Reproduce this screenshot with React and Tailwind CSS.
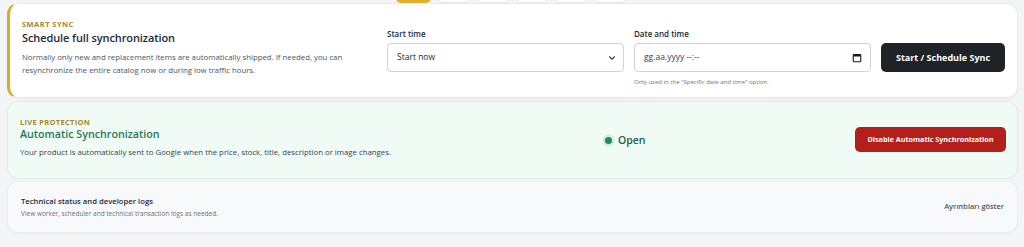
import React from "react";

function Chevron() {
  return (
    <svg width="10" height="10" viewBox="0 0 24 24" fill="none" stroke="#374151" strokeWidth="2.6" strokeLinecap="round" strokeLinejoin="round">
      <path d="M6 9l6 6 6-6" />
    </svg>
  );
}

function CalendarIcon() {
  return (
    <svg width="10" height="10" viewBox="0 0 12 12" fill="none">
      <rect x="1.5" y="1.8" width="9" height="8.7" rx="1" stroke="#111827" strokeWidth="1.3" />
      <rect x="1.5" y="1.8" width="9" height="2.4" fill="#111827" />
    </svg>
  );
}

export default function App() {
  return (
    <div
      className="w-[1024px] h-[247px] overflow-hidden bg-[#f3f4f6] pl-[7px] pr-[6px]"
      style={{ fontFamily: '"Open Sans", "Noto Sans", sans-serif' }}
    >
      {/* tabs peeking at top */}
      <div className="flex gap-[7px] pl-[389px] mt-[-17px] h-[20px]">
        <div className="w-[35px] h-[20px] rounded-[5px] bg-[#e0b12c]" />
        <div className="w-[32px] h-[20px] rounded-[5px] bg-white border border-[#e5e7eb]" />
        <div className="w-[32px] h-[20px] rounded-[5px] bg-white border border-[#e5e7eb]" />
        <div className="w-[32px] h-[20px] rounded-[5px] bg-white border border-[#e5e7eb]" />
        <div className="w-[32px] h-[20px] rounded-[5px] bg-white border border-[#e5e7eb]" />
        <div className="w-[32px] h-[20px] rounded-[5px] bg-white border border-[#e5e7eb]" />
      </div>

      {/* card 1 */}
      <div className="h-[95px] rounded-[11px] bg-white border border-[#e8eaee] border-l-[3px] border-l-[#d9ac2c] shadow-[0_1px_2px_rgba(0,0,0,0.04)] flex items-start pl-[12px] pr-[12px]">
        <div className="w-[350px] pt-[15px]">
          <div className="text-[7.5px] font-bold tracking-[0.06em] text-[#a8872c] leading-[10px]">SMART SYNC</div>
          <div className="text-[11px] font-semibold text-[#1f2937] leading-[16px] mt-[1px] tracking-[-0.1px]">Schedule full synchronization</div>
          <div className="text-[7.8px] text-[#4b5563] leading-[12.5px] mt-[5px]">
            Normally only new and replacement items are automatically shipped. If needed, you can resynchronize the entire catalog now or during low traffic hours.
          </div>
        </div>
        <div className="ml-auto flex items-start gap-[10px] pt-[24px]">
          <div className="w-[237px]">
            <div className="text-[8px] font-semibold text-[#1f2937] leading-[12px] mb-[3px]">Start time</div>
            <div className="h-[29px] rounded-[4px] border border-[#cfd4db] bg-white flex items-center justify-between pl-[9px] pr-[6px]">
              <span className="text-[8.5px] text-[#1f2937]">Start now</span>
              <Chevron />
            </div>
          </div>
          <div className="w-[237px]">
            <div className="text-[8px] font-semibold text-[#1f2937] leading-[12px] mb-[3px]">Date and time</div>
            <div className="h-[29px] rounded-[4px] border border-[#cfd4db] bg-white flex items-center justify-between pl-[9px] pr-[8px]">
              <span className="text-[8.5px] text-[#374151]">gg.aa.yyyy --:--</span>
              <CalendarIcon />
            </div>
            <div className="text-[6px] text-[#6b7280] leading-[8px] mt-[6px]">Only used in the "Specific date and time" option.</div>
          </div>
          <div className="pt-[15px]">
            <button className="h-[29px] w-[124px] rounded-[5px] bg-[#1e2327] text-white text-[9px] font-bold">Start / Schedule Sync</button>
          </div>
        </div>
      </div>

      {/* card 2 */}
      <div className="mt-[3px] h-[78px] rounded-[11px] bg-[#f1fbf6] border border-[#d9eee2] flex items-center pl-[12px] pr-[11px]">
        <div className="w-[560px] mt-[-6px]">
          <div className="text-[7.5px] font-bold tracking-[0.04em] text-[#a8872c] leading-[10px]">LIVE PROTECTION</div>
          <div className="text-[10.7px] font-semibold text-[#1d7a55] leading-[15px]">Automatic Synchronization</div>
          <div className="text-[7.8px] text-[#374151] leading-[11px] mt-[5px]">
            Your product is automatically sent to Google when the price, stock, title, description or image changes.
          </div>
        </div>
        <div className="flex items-center gap-[6px] ml-[25px] mt-[1px]">
          <span className="w-[7px] h-[7px] rounded-full bg-[#1f8a5b] shadow-[0_0_0_2.5px_#cdeedc]" />
          <span className="text-[10.5px] font-semibold text-[#1f5f45]">Open</span>
        </div>
        <button className="ml-auto h-[25px] w-[151px] rounded-[5px] bg-[#b3201c] text-white text-[7.2px] font-bold mt-[-2px]">Disable Automatic Synchronization</button>
      </div>

      {/* card 3 */}
      <div className="mt-[2px] h-[52px] rounded-[11px] bg-[#f8f9fb] border border-[#eceef1] shadow-[0_1px_2px_rgba(0,0,0,0.03)] flex items-center pl-[13px] pr-[13px]">
        <div className="mt-[-2px]">
          <div className="text-[7.7px] font-semibold text-[#1f2937] leading-[12px]">Technical status and developer logs</div>
          <div className="text-[6.5px] text-[#6b7280] leading-[9px] mt-[2px]">View worker, scheduler and technical transaction logs as needed.</div>
        </div>
        <div className="ml-auto text-[7.4px] font-semibold text-[#4b5563]">Ayrıntıları göster</div>
      </div>
    </div>
  );
}
